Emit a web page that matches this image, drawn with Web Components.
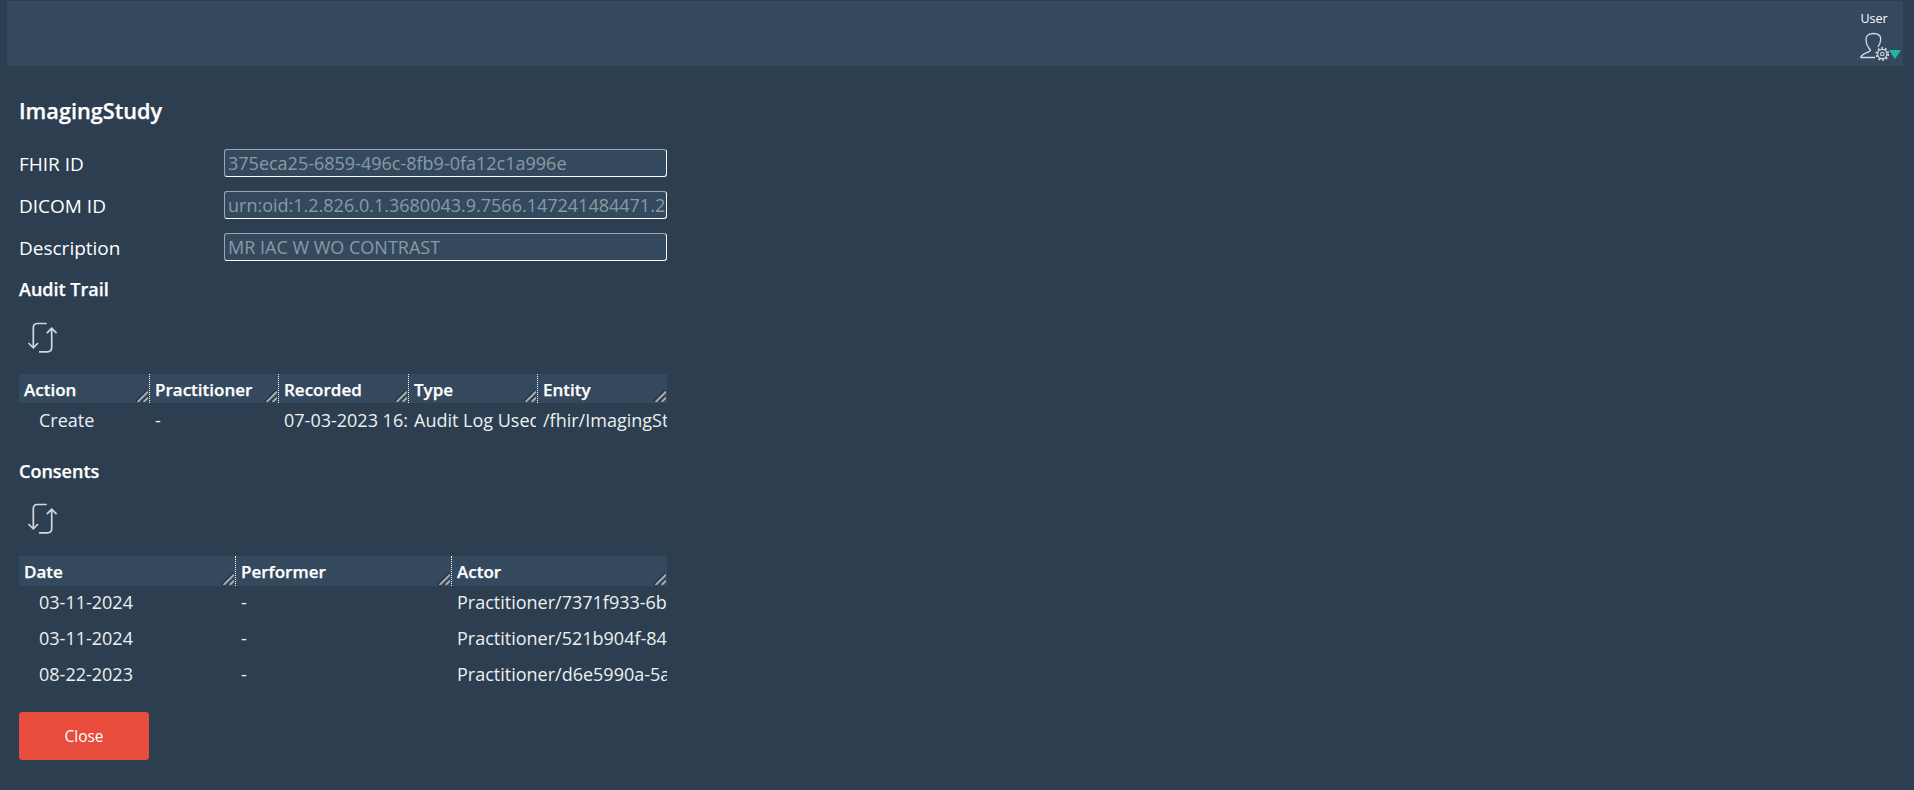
<!DOCTYPE html>
<html>
<head>
<meta charset="utf-8">
<title>ImagingStudy</title>
<style>
    html, body{
        margin: 0;
        height: 100%;
        background: #2d3e50;
        color: #fff;
        font-family: "Open Sans", "Liberation Sans", sans-serif;
        font-size: 18px;
        overflow: hidden;
    }
</style>
</head>
<body>
<app-header></app-header>
<study-screen></study-screen>

<script>
const defineShadow = (name, html) => {
    customElements.define(name, class extends HTMLElement{
        constructor(){
            super()
            this._shadowRoot = this.attachShadow({mode: 'open'})
            this._shadowRoot.innerHTML = html
        }
    })
}

defineShadow('app-header', `
    <style>
        :host{
            display: flex;
            justify-content: flex-end;
            height: 65px;
            margin: 1px 11px 0 7px;
            background: #34495e;
        }
        .user{
            display: flex;
            flex-direction: column;
            align-items: center;
            width: 44px;
            padding-top: 10px;
            font-size: 12.500px;
            line-height: 16px;
        }
        .user span{ margin-right: 14px; }
        svg{
            display: block;
            margin-top: 5px;
        }
    </style>
    <div class="user">
        <span>User</span>
        <svg width="44" height="30" viewBox="0 0 44 30" fill="none" stroke="#d5dade">
            <path d="M11.500 18C8.500 15 7 10 7 7C7 3.500 10 1.500 14.300 1.500S21.700 3.500 21.700 7C21.700 10 20.500 13 19 15" stroke-width="1.300"/>
            <path d="M11.500 18C11.500 20.500 2 21 2 25.500H16" stroke-width="1.500"/>
            <circle cx="23.300" cy="22" r="4.600" stroke-width="1.300"/>
            <circle cx="23.300" cy="22" r="1.800" stroke-width="1.100"/>
            <circle cx="23.300" cy="22" r="6" stroke-width="1.600" stroke-dasharray="2 1.770"/>
            <path d="M30 18h12l-6 9z" fill="#1abc9c" stroke="none"/>
        </svg>
    </div>
`)

defineShadow('field-row', `
    <style>
        :host{
            display: grid;
            grid-template-columns: 205px 443px;
            grid-template-rows: 28px;
            align-items: center;
            margin-bottom: 14px;
            font-size: 19px;
            line-height: 30px;
        }
        ::slotted(span){ padding-top: 2px; }
        .value{
            box-sizing: border-box;
            height: 28px;
            padding: 0 3px;
            font-size: 18px;
            line-height: 26px;
            border: 1px solid #fff;
            border-top-color: #9aa5af;
            border-left-color: #9aa5af;
            border-radius: 3px;
            background: #34495e;
            color: #869ca3;
            white-space: nowrap;
            overflow: hidden;
        }
    </style>
    <slot name="label"></slot>
    <div class="value"><slot></slot></div>
`)

defineShadow('section-title', `
    <style>
        :host{
            display: block;
            font-weight: 600;
            line-height: 24px;
            -webkit-text-stroke: .25px;
        }
    </style>
    <slot></slot>
`)

defineShadow('refresh-button', `
    <style>
        :host{
            display: block;
            width: 32px;
            height: 32px;
            cursor: pointer;
        }
        svg{ display: block; }
    </style>
    <svg width="32" height="32" viewBox="0 0 32 32" fill="none" stroke="#d3d7db" stroke-width="1.700">
        <path d="M19.700 1.500H10.500q-4.200 0-4.200 4.200V25.500"/>
        <path d="M1.500 21l4.800 4.800L11 21"/>
        <path d="M12 29.800h8.500q4.200 0 4.200-4.200V6.500"/>
        <path d="M19.800 11.200l4.900-4.900 4.900 4.900"/>
    </svg>
`)

defineShadow('data-table', `
    <style>
        :host{
            display: grid;
            width: 648px;
            overflow: hidden;
        }
    </style>
    <slot></slot>
`)

defineShadow('head-cell', `
    <style>
        :host{
            display: block;
            position: relative;
            box-sizing: border-box;
            height: 29px;
            padding-left: 5px;
            border-right: 1px dotted #fff;
            background: #34495e;
            font-size: 17px;
            font-weight: 600;
            line-height: 31px;
            -webkit-text-stroke: .25px;
            overflow: hidden;
        }
        :host([last]){ border-right: 0; }
        svg{
            position: absolute;
            right: 1px;
            bottom: 1px;
        }
    </style>
    <slot></slot>
    <svg width="12" height="12" viewBox="0 0 12 12" fill="none">
        <path d="M0 11.500L11 .5" stroke="#1d2630" stroke-width="1.500"/>
        <path d="M1.500 12L12 1.500" stroke="#a7adb3" stroke-width="2"/>
        <path d="M6 12l5-5" stroke="#1d2630" stroke-width="1.500"/>
        <path d="M7.500 12L12 7.500" stroke="#a7adb3" stroke-width="2"/>
    </svg>
`)

defineShadow('body-cell', `
    <style>
        :host{
            display: block;
            box-sizing: border-box;
            height: 36px;
            padding-left: 5px;
            line-height: 32px;
            white-space: nowrap;
            overflow: hidden;
            color: #ecf0f1;
        }
        :host([first]){ padding-left: 20px; }
    </style>
    <slot></slot>
`)

defineShadow('red-button', `
    <style>
        :host{
            display: block;
            width: 130px;
            height: 48px;
            border-radius: 3px;
            background: #e74c3c;
            color: #fff;
            font-size: 15.500px;
            line-height: 48px;
            text-align: center;
            cursor: pointer;
        }
    </style>
    <slot></slot>
`)

defineShadow('study-screen', `
    <style>
        :host{
            display: block;
            padding: 0 0 0 19px;
        }
        h1{
            margin: 31px 0 24px;
            font-size: 21.700px;
            font-weight: 600;
            line-height: 28px;
            -webkit-text-stroke: .25px;
        }
        .audit-title{ margin-top: 16px; }
        .audit-tool{ margin: 21px 0 20px 8px; }
        .consents-tool{ margin: 20px 0 21px 8px; }
        .consents-title{ margin-top: 22px; }
        .audit{ grid-template-columns: 131px 129px 130px 129px 129px; }
        .consents{ grid-template-columns: 217px 216px 215px; }
        .audit body-cell{ height: 34px; line-height: 34px; }
        .audit .type{ margin-right: 2px; }
        .consents head-cell{ height: 30px; }
        red-button{ margin-top: 18px; }
    </style>
    <h1>ImagingStudy</h1>
    <field-row><span slot="label">FHIR ID</span>375eca25-6859-496c-8fb9-0fa12c1a996e</field-row>
    <field-row><span slot="label">DICOM ID</span>urn:oid:1.2.826.0.1.3680043.9.7566.147241484471.2</field-row>
    <field-row><span slot="label">Description</span>MR IAC W WO CONTRAST</field-row>

    <section-title class="audit-title">Audit Trail</section-title>
    <refresh-button class="audit-tool"></refresh-button>
    <data-table class="audit">
        <head-cell>Action</head-cell>
        <head-cell>Practitioner</head-cell>
        <head-cell>Recorded</head-cell>
        <head-cell>Type</head-cell>
        <head-cell last>Entity</head-cell>
        <body-cell first>Create</body-cell>
        <body-cell>-</body-cell>
        <body-cell>07-03-2023 16:15:29</body-cell>
        <body-cell class="type">Audit Log Used</body-cell>
        <body-cell>/fhir/ImagingStudy/375eca25</body-cell>
    </data-table>

    <section-title class="consents-title">Consents</section-title>
    <refresh-button class="consents-tool"></refresh-button>
    <data-table class="consents">
        <head-cell>Date</head-cell>
        <head-cell>Performer</head-cell>
        <head-cell last>Actor</head-cell>
        <body-cell first>03-11-2024</body-cell>
        <body-cell>-</body-cell>
        <body-cell>Practitioner/7371f933-6b12</body-cell>
        <body-cell first>03-11-2024</body-cell>
        <body-cell>-</body-cell>
        <body-cell>Practitioner/521b904f-84a0</body-cell>
        <body-cell first>08-22-2023</body-cell>
        <body-cell>-</body-cell>
        <body-cell>Practitioner/d6e5990a-5ac3</body-cell>
    </data-table>
    <red-button>Close</red-button>
`)
</script>
</body>
</html>
